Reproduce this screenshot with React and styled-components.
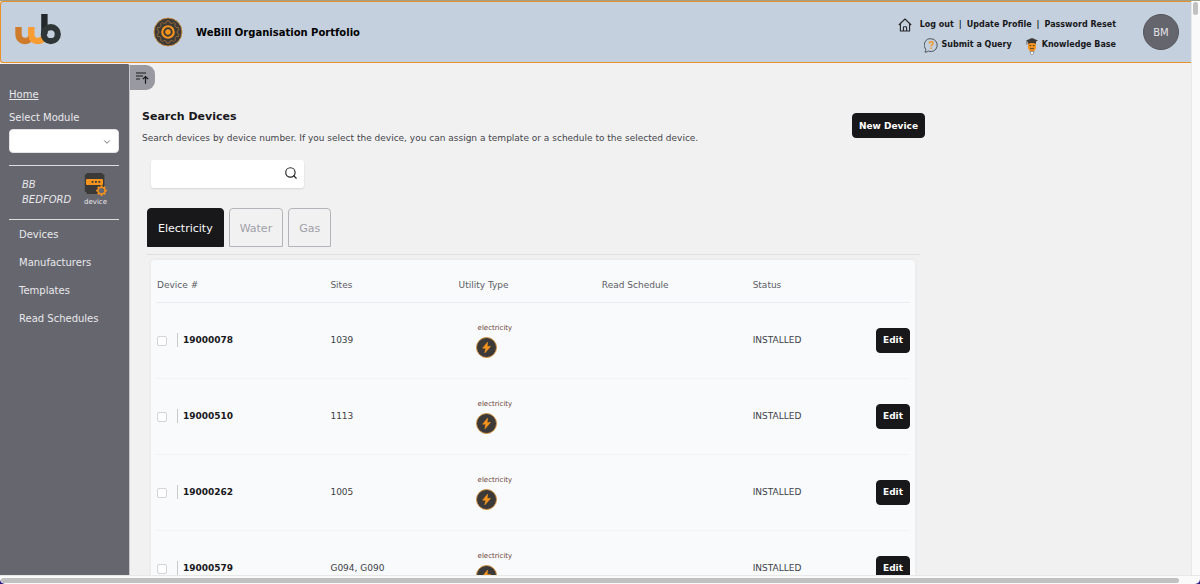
import React from "react";
import styled, { createGlobalStyle } from "styled-components";
import { ChevronDown, Search } from "lucide-react";

const GlobalStyle = createGlobalStyle`
    * {
        box-sizing: border-box;
    }
    body {
        margin: 0;
        background: #2c1a86;
        color: #18181b;
        font-family: Verdana, "DejaVu Sans", sans-serif;
        font-size: 9px;
        line-height: 14px;
    }
    button, input, select {
        font-family: inherit;
        margin: 0;
    }
    h1, h2, p, ul {
        margin: 0;
        padding: 0;
    }
    svg {
        display: block;
        flex: none;
    }
`;

const Shell = styled.div`
    display: grid;
    grid-template-columns: 1fr 9px;
    grid-template-rows: 1fr 9px;
    height: 100vh;
    overflow: hidden;
    border-top: 1px solid #9fa08a;
    border-radius: 0 0 5px 5px;
    background: #fafafa;
`;

const Page = styled.div`
    display: flex;
    flex-direction: column;
    min-width: 0;
    min-height: 0;
    overflow: hidden;
    background: #f1f1f1;
`;

const ScrollTrack = styled.div`
    grid-column: ${props => (props.$horizontal ? "1 / -1" : "auto")};
    border-left: ${props => (props.$horizontal ? "0" : "1px solid #e8e8e8")};
    border-top: ${props => (props.$horizontal ? "1px solid #e8e8e8" : "0")};
    padding: ${props => (props.$horizontal ? "2px 21px 1px 1px" : "1px 2px 0 1px")};
`;

const ScrollThumb = styled.div`
    height: ${props => (props.$horizontal ? "5px" : "13px")};
    border-radius: 3px;
    background: #c1c1c1;
`;

const Header = styled.header`
    display: flex;
    align-items: center;
    flex: none;
    height: 62px;
    padding: 0 12px 0 14px;
    border: 1px solid #e8912b;
    border-right: 0;
    border-radius: 3px 0 0 3px;
    background: #c4d0dd;
`;

const Brand = styled.a`
    display: block;
    width: 138px;
    padding-bottom: 4px;
`;

const Title = styled.h1`
    flex: 1;
    padding: 2px 0 0 13px;
    font-size: 10px;
    line-height: 14px;
    color: #000;
`;

const HeaderLinks = styled.nav`
    display: flex;
    flex-direction: column;
    align-items: flex-end;
    gap: 5px;
    padding-top: 6px;
    font-size: 8px;
    font-weight: bold;
`;

const LinkRow = styled.div`
    display: flex;
    gap: ${props => props.$gap};
    height: 15px;
`;

const HeaderLink = styled.a`
    display: flex;
    gap: ${props => props.$gap || "0"};
    color: #18181b;
    text-decoration: none;
`;

const Avatar = styled.button`
    width: 36px;
    height: 36px;
    margin-left: 27px;
    padding: 0;
    border: 1px solid #55555c;
    border-radius: 50%;
    background: #65656e;
    color: #e4e4e7;
    font-size: 10px;
`;

const Body = styled.div`
    display: flex;
    flex: 1;
    min-height: 0;
    padding-top: 1px;
`;

const Sidebar = styled.aside`
    flex: none;
    width: 130px;
    padding: 23px 10px 0 9px;
    border-right: 1px solid #c9c9cd;
    border-radius: 0 2px 0 0;
    background: #66666f;
    color: #e9e9eb;
    font-size: 10px;
    line-height: 15px;
`;

const HomeLink = styled.a`
    display: block;
    color: inherit;
`;

const ModuleLabel = styled.label`
    display: block;
    margin-top: 8px;
`;

const SelectBox = styled.div`
    position: relative;
    margin-top: 4px;
    color: #55555e;

    svg {
        position: absolute;
        top: 8px;
        right: 7px;
        pointer-events: none;
    }
`;

const Select = styled.select`
    display: block;
    width: 100%;
    height: 24px;
    padding: 0 20px 0 8px;
    appearance: none;
    border: 1px solid #e4e4e7;
    border-radius: 4px;
    background: #fff;
    font-size: 9px;
`;

const SiteBox = styled.section`
    display: flex;
    justify-content: space-between;
    height: 55px;
    margin-top: 12px;
    padding: 7px 12px 0 13px;
    border-top: 1px solid #dededf;
    border-bottom: 1px solid #dededf;
`;

const SiteName = styled.div`
    width: 52px;
    padding-top: 4px;
    font-style: italic;
`;

const SiteKind = styled.div`
    display: flex;
    flex-direction: column;
    align-items: center;
    font-size: 7px;
    line-height: 12px;
`;

const Menu = styled.ul`
    padding: 1px 0 0 10px;
    list-style: none;
`;

const MenuLink = styled.a`
    display: block;
    color: inherit;
    line-height: 28px;
    text-decoration: none;
    white-space: nowrap;
`;

const Main = styled.main`
    flex: 1;
    min-width: 0;
`;

const CollapseButton = styled.button`
    display: flex;
    align-items: center;
    width: 25px;
    height: 25px;
    margin-top: 1px;
    padding: 0 0 0 6px;
    border: 0;
    border-radius: 0 9px 9px 0;
    background: #9999a1;
    color: #18181b;
`;

const Content = styled.div`
    max-width: 795px;
    padding: 19px 0 0 12px;
`;

const Intro = styled.div`
    display: flex;
    justify-content: space-between;
`;

const Heading = styled.h2`
    font-size: 11px;
    line-height: 16px;
`;

const Lead = styled.p`
    margin-top: 6px;
    color: #45454c;
`;

const DarkButton = styled.button`
    height: 25px;
    padding: 0 6px;
    border: 1px solid #18181b;
    border-radius: 4px;
    background: #18181b;
    color: #fff;
    font-size: 9px;
    font-weight: bold;
    white-space: nowrap;
`;

const IntroAction = styled.div`
    padding-top: 4px;
`;

const SearchBox = styled.form`
    display: flex;
    align-items: center;
    width: 153px;
    height: 28px;
    margin: 15px 0 0 9px;
    padding: 0 6px;
    border-radius: 3px;
    background: #fff;
    box-shadow: 0 1px 2px rgba(0, 0, 0, 0.12);
`;

const SearchInput = styled.input`
    flex: 1;
    min-width: 0;
    padding: 0 4px;
    border: 0;
    outline: 0;
    background: none;
    font-size: 9px;
`;

const IconButton = styled.button`
    padding: 0 0 2px;
    border: 0;
    background: none;
    color: #27272a;
`;

const Tabs = styled.div`
    display: flex;
    gap: 5px;
    margin: 20px 5px 0;
    padding-bottom: 7px;
    border-bottom: 1px solid #e0e0e4;
`;

const Tab = styled.button`
    height: 39px;
    padding: 1px 10px 0;
    border: 1px solid ${props => (props.$active ? "#18181b" : "#b4b4ba")};
    border-radius: 4px 4px 0 0;
    background: ${props => (props.$active ? "#18181b" : "transparent")};
    color: ${props => (props.$active ? "#fafafa" : "#a0a0a9")};
    font-size: 11px;
`;

const Panel = styled.div`
    margin: 5px 10px 0 9px;
    padding: 0 5px;
    border-radius: 4px;
    background: #f8fafc;
    box-shadow: 0 0 4px rgba(0, 0, 0, 0.06);
`;

const Table = styled.table`
    width: 100%;
    table-layout: fixed;
    border-collapse: collapse;
`;

const HeadCell = styled.th`
    width: ${props => props.$width || "auto"};
    height: 42px;
    padding: 8px 0 0 1px;
    border-bottom: 1px solid #eaecef;
    color: #5c5c64;
    font-weight: normal;
    text-align: left;
`;

const Cell = styled.td`
    height: 76px;
    padding: 0 0 0 ${props => (props.$end ? "0" : "1px")};
    border-bottom: 1px solid #f1f3f5;
    color: #3f3f46;
    text-align: ${props => (props.$end ? "right" : "left")};
`;

const Device = styled.label`
    display: flex;
    align-items: center;
    color: #18181b;
    font-weight: bold;
`;

const Check = styled.input`
    width: 10px;
    height: 10px;
    margin: 1px 10px 0 0;
    appearance: none;
    border: 1px solid #d4d4d8;
    border-radius: 2px;
    background: #fff;

    &:checked {
        background: #18181b;
    }
`;

const Serial = styled.span`
    padding-left: 5px;
    border-left: 1px solid #c8c8cd;
`;

const Utility = styled.div`
    display: flex;
    flex-direction: column;
    gap: 4px;
    padding-left: 17px;
    color: #6b4132;
    font-size: 7px;
    line-height: 10px;
`;

const UtilityName = styled.span`
    padding-left: 2px;
`;

const Logo = () => (
    <svg width="46" height="32" viewBox="0 0 46 32" fill="none" strokeWidth="6.4">
        <path d="M3.5 13v6.8c0 5.2 3 7.2 6.2 7.2s6.3-2 6.8-5" stroke="#cf7b2c" />
        <path d="M16.3 13v7.4c0 4.6 2.6 6.6 6.2 6.6 3.4 0 6-1.6 6.8-4.6" stroke="#f89c33" />
        <path d="M29.4 0v20" stroke="#22282b" />
        <circle cx="35.8" cy="20.2" r="7" stroke="#2f3638" strokeWidth="6.2" />
    </svg>
);

const gearPoints = (teeth, inner, outer) => {
    const points = [];
    for (let i = 0; i < teeth; i++) {
        [[-0.3, inner], [-0.18, outer], [0.18, outer], [0.3, inner]].forEach(([shift, r]) => {
            const angle = ((i + shift) / teeth) * Math.PI * 2;
            points.push(`${(Math.sin(angle) * r).toFixed(2)},${(-Math.cos(angle) * r).toFixed(2)}`);
        });
    }
    return points.join(" ");
};

const GearBadge = () => (
    <svg width="30" height="30" viewBox="-15 -15 30 30">
        <circle r="14" fill="#3b3a38" stroke="#e0922f" strokeWidth="0.8" />
        <polygon points={gearPoints(10, 9.3, 11.2)} fill="none" stroke="#b87a30" strokeWidth="0.7" />
        <circle r="6.8" fill="#f7941d" />
        <circle r="3.7" fill="none" stroke="#3b3a38" strokeWidth="1.9" />
    </svg>
);

const HomeIcon = () => (
    <svg width="14" height="14" viewBox="0 0 14 14" fill="none" stroke="#27272a" strokeWidth="1.1" strokeLinejoin="round">
        <path d="M.8 7 7 1l6.2 6M2.4 5.8V13h9.2V5.8M5.4 13V9.4c0-.4.3-.7.7-.7h1.8c.4 0 .7.3.7.7V13" />
    </svg>
);

const QueryIcon = () => (
    <svg width="14" height="15" viewBox="0 0 14 15" fill="none">
        <path d="M7.2.8a6.2 6.4 0 1 1-2.6 12.3c-1 .8-2.3 1.1-3.7 1 .7-.8 1-1.7.9-2.6A6.2 6.4 0 0 1 7.2.8z" stroke="#44474c" strokeWidth="0.9" />
        <path d="M5.2 5.6c0-1.2.8-1.9 1.9-1.9s1.9.7 1.9 1.7c0 1.4-1.9 1.5-1.9 3.1M7.1 9.5v1.4" stroke="#f7941d" strokeWidth="1.4" />
    </svg>
);

const KnowledgeIcon = () => (
    <svg width="12" height="17" viewBox="0 0 12 17">
        <path d="M2 5h8v4.6c0 2-1.6 3-2.2 4H4.2c-.6-1-2.2-2-2.2-4z" fill="#f7941d" />
        <path d="M6 0l6 2.4L10 3.6v2.2c-2-1-6-1-8 0V3.8L0 2.4z" fill="#3b3a38" />
        <path d="M.9 3v3.6" stroke="#3b3a38" strokeWidth="0.7" />
        <path d="M3.4 7.6h1.8M6.8 7.6h1.8M4 10c1 1.1 3 1.1 4 0" fill="none" stroke="#3b3a38" strokeWidth="0.9" />
        <path d="M4.3 13.4h3.4v1.8L6 16.8l-1.7-1.6z" fill="#fff" stroke="#55555c" strokeWidth="0.6" />
    </svg>
);

const MeterIcon = () => (
    <svg width="23" height="23" viewBox="0 0 23 23">
        <path d="M3 0h15l1 1.6h1.4v15.4h-1.4l-1 4H3l-1-2.2H.8V1.6H2z" fill="#3b3a38" />
        <rect x="2" y="6" width="17" height="6" rx="1" fill="#f7941d" />
        <path d="M7.6 8.8h1.9M11 8.8h1.9M14.4 8.8h1.9" stroke="#3b3a38" strokeWidth="1.8" />
        <g transform="translate(17.5 17.6)">
            <polygon points={gearPoints(8, 4, 5.2)} fill="#f7941d" stroke="#f7941d" strokeWidth="0.4" />
            <circle r="2.7" fill="#66666f" />
        </g>
    </svg>
);

const SortIcon = () => (
    <svg width="13" height="12" viewBox="0 0 13 12" fill="none" stroke="currentColor" strokeWidth="1.2">
        <path d="M0 1h10M0 4h7M0 7h4M9.5 11.8V4.6M6.8 7.2l2.7-2.7 2.7 2.7" />
    </svg>
);

const BoltIcon = () => (
    <svg width="21" height="21" viewBox="0 0 21 21">
        <circle cx="10.5" cy="10.5" r="10" fill="#3b3a38" stroke="#d98e35" strokeWidth="0.9" />
        <path d="M11.6 5 6.6 11.2h3.1L8.8 16l5.8-6.6h-3.4z" fill="#f7941d" stroke="#f7941d" strokeWidth="0.5" />
    </svg>
);

const menu = ["Devices", "Manufacturers", "Templates", "Read Schedules"];

const tabs = ["Electricity", "Water", "Gas"];

const devices = [
    { serial: "19000078", sites: "1039", utility: "electricity", status: "INSTALLED" },
    { serial: "19000510", sites: "1113", utility: "electricity", status: "INSTALLED" },
    { serial: "19000262", sites: "1005", utility: "electricity", status: "INSTALLED" },
    { serial: "19000579", sites: "G094, G090", utility: "electricity", status: "INSTALLED" },
];

const TopBar = () => (
    <Header>
        <Brand href="#home" aria-label="WeBill"><Logo /></Brand>
        <GearBadge />
        <Title>WeBill Organisation Portfolio</Title>
        <HeaderLinks>
            <LinkRow $gap="5px">
                <HeaderLink href="#logout" $gap="8px"><HomeIcon />Log out</HeaderLink>|
                <HeaderLink href="#profile">Update Profile</HeaderLink>|
                <HeaderLink href="#password">Password Reset</HeaderLink>
            </LinkRow>
            <LinkRow $gap="14px">
                <HeaderLink href="#query" $gap="4px"><QueryIcon />Submit a Query</HeaderLink>
                <HeaderLink href="#knowledge" $gap="4px"><KnowledgeIcon />Knowledge Base</HeaderLink>
            </LinkRow>
        </HeaderLinks>
        <Avatar type="button">BM</Avatar>
    </Header>
);

const SideNav = () => (
    <Sidebar>
        <HomeLink href="#home">Home</HomeLink>
        <ModuleLabel htmlFor="module">Select Module</ModuleLabel>
        <SelectBox>
            <Select id="module" defaultValue="">
                <option value=""></option>
            </Select>
            <ChevronDown size={10} strokeWidth={2} />
        </SelectBox>
        <SiteBox>
            <SiteName>BB BEDFORD</SiteName>
            <SiteKind><MeterIcon />device</SiteKind>
        </SiteBox>
        <Menu>
            {menu.map(item => (
                <li key={item}><MenuLink href="#menu">{item}</MenuLink></li>
            ))}
        </Menu>
    </Sidebar>
);

const DeviceRow = (props) => (
    <tr>
        <Cell>
            <Device>
                <Check type="checkbox" />
                <Serial>{props.serial}</Serial>
            </Device>
        </Cell>
        <Cell>{props.sites}</Cell>
        <Cell>
            <Utility>
                <UtilityName>{props.utility}</UtilityName>
                <BoltIcon />
            </Utility>
        </Cell>
        <Cell />
        <Cell>{props.status}</Cell>
        <Cell $end><DarkButton type="button">Edit</DarkButton></Cell>
    </tr>
);

const App = () => {
    const [activeTab, setActiveTab] = React.useState("Electricity");

    return (
        <Shell>
            <GlobalStyle />
            <Page>
                <TopBar />
                <Body>
                    <SideNav />
                    <Main>
                        <CollapseButton type="button" aria-label="Collapse menu"><SortIcon /></CollapseButton>
                        <Content>
                            <Intro>
                                <div>
                                    <Heading>Search Devices</Heading>
                                    <Lead>Search devices by device number. If you select the device, you can assign a template or a schedule to the selected device.</Lead>
                                </div>
                                <IntroAction>
                                    <DarkButton type="button">New Device</DarkButton>
                                </IntroAction>
                            </Intro>
                            <SearchBox onSubmit={e => e.preventDefault()}>
                                <SearchInput type="text" aria-label="Device number" />
                                <IconButton type="submit" aria-label="Search"><Search size={14} strokeWidth={2} /></IconButton>
                            </SearchBox>
                            <Tabs role="tablist">
                                {tabs.map(tab => (
                                    <Tab
                                        key={tab}
                                        type="button"
                                        role="tab"
                                        aria-selected={tab === activeTab}
                                        $active={tab === activeTab}
                                        onClick={() => setActiveTab(tab)}
                                    >
                                        {tab}
                                    </Tab>
                                ))}
                            </Tabs>
                            <Panel>
                                <Table>
                                    <thead>
                                        <tr>
                                            <HeadCell $width="23%">Device #</HeadCell>
                                            <HeadCell $width="17%">Sites</HeadCell>
                                            <HeadCell $width="19%">Utility Type</HeadCell>
                                            <HeadCell $width="20%">Read Schedule</HeadCell>
                                            <HeadCell $width="14%">Status</HeadCell>
                                            <HeadCell />
                                        </tr>
                                    </thead>
                                    <tbody>
                                        {devices.map(device => (
                                            <DeviceRow key={device.serial} {...device} />
                                        ))}
                                    </tbody>
                                </Table>
                            </Panel>
                        </Content>
                    </Main>
                </Body>
            </Page>
            <ScrollTrack><ScrollThumb /></ScrollTrack>
            <ScrollTrack $horizontal><ScrollThumb $horizontal /></ScrollTrack>
        </Shell>
    );
};

export default App;
